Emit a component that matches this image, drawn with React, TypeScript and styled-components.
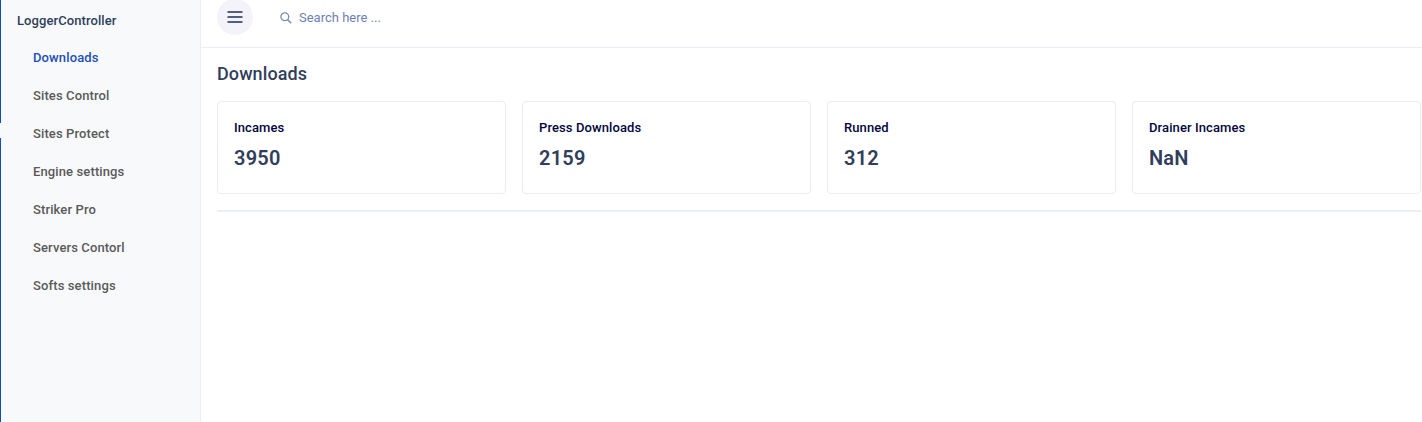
import React from 'react';
import styled, { createGlobalStyle } from 'styled-components';

const GlobalStyle = createGlobalStyle`
  * { box-sizing: border-box; }
  body {
    margin: 0;
    background: #fff;
    font-family: Roboto, "Liberation Sans", sans-serif;
    font-size: 13px;
    color: #313e5b;
    overflow: hidden;
  }
`;

const Page = styled.div`
  display: flex;
  height: 100vh;
`;

const Rail = styled.div`
  flex: 0 0 1px;
  display: flex;
  flex-direction: column;
  background: #f8f9fb;
`;

const RailSegment = styled.span<{ $height?: number }>`
  background: #0f4fc4;
  ${({ $height }) => ($height ? `height: ${$height}px; margin-bottom: 15px;` : 'flex: 1;')}
`;

const Sidebar = styled.aside`
  flex: 0 0 200px;
  background: #f8f9fb;
  border-right: 1px solid #ebecf4;
`;

const Brand = styled.div`
  padding: 11px 16px 8px;
  line-height: 20px;
  font-weight: 500;
  letter-spacing: 0.08px;
`;

const Nav = styled.nav`
  display: flex;
  flex-direction: column;
`;

const NavItem = styled.a<{ $active?: boolean }>`
  padding: 0 32px;
  line-height: 38px;
  font-weight: 500;
  letter-spacing: 0.12px;
  color: ${({ $active }) => ($active ? '#1d4fb8' : '#5a5a5a')};
`;

const Main = styled.main`
  flex: 1;
  min-width: 0;
`;

const Header = styled.header`
  display: flex;
  align-items: flex-start;
  height: 48px;
  padding-left: 16px;
  border-bottom: 1px solid #ebecf4;
`;

const MenuButton = styled.button`
  display: flex;
  align-items: center;
  justify-content: center;
  width: 36px;
  height: 36px;
  margin: -1px 27px 0 0;
  padding: 0;
  border: 0;
  border-radius: 50%;
  background: #f3f3f9;
  color: #525f80;
`;

const Search = styled.label`
  display: flex;
  align-items: center;
  height: 35px;
  gap: 7px;
  color: #7081b0;
`;

const SearchText = styled.span`
  font-size: 13px;
  line-height: 35px;
`;

const Content = styled.section`
  padding: 15px 1px 0 16px;
`;

const Title = styled.h1`
  margin: 0 0 16px;
  font-size: 18px;
  line-height: 22px;
  font-weight: 500;
  letter-spacing: 0.1px;
`;

const Cards = styled.div`
  display: grid;
  grid-template-columns: repeat(4, 1fr);
  gap: 16px;
`;

const Card = styled.article`
  height: 93px;
  padding: 16px;
  border: 1px solid #ebecf4;
  border-radius: 4px;
`;

const CardLabel = styled.div`
  font-weight: 500;
  line-height: 20px;
  letter-spacing: 0.1px;
  color: #03053d;
`;

const CardValue = styled.div`
  margin-top: 8px;
  font-size: 20px;
  line-height: 24px;
  font-weight: 650;
  letter-spacing: 0.2px;
`;

const Divider = styled.hr`
  height: 2px;
  margin: 16px 0 0;
  border: 0;
  background: #ebeef4;
`;

const links = [
  'Downloads',
  'Sites Control',
  'Sites Protect',
  'Engine settings',
  'Striker Pro',
  'Servers Contorl',
  'Softs settings',
];

const stats = [
  { label: 'Incames', value: '3950' },
  { label: 'Press Downloads', value: '2159' },
  { label: 'Runned', value: '312' },
  { label: 'Drainer Incames', value: 'NaN' },
];

export default function App() {
  return (
    <Page>
      <GlobalStyle />
      <Rail>
        <RailSegment $height={123} />
        <RailSegment />
      </Rail>
      <Sidebar>
        <Brand>LoggerController</Brand>
        <Nav>
          {links.map((link, i) => (
            <NavItem key={link} $active={i === 0}>{link}</NavItem>
          ))}
        </Nav>
      </Sidebar>
      <Main>
        <Header>
          <MenuButton aria-label="Menu">
            <svg width="16" height="12" viewBox="0 0 16 12" fill="currentColor">
              <rect x="0.5" y="0" width="15" height="2" />
              <rect x="0.5" y="5" width="15" height="2" />
              <rect x="0.5" y="10" width="15" height="2" />
            </svg>
          </MenuButton>
          <Search>
            <svg width="12" height="12" viewBox="0 0 12 12" fill="none" stroke="#7c8db0" strokeWidth="1.3">
              <circle cx="4.8" cy="4.8" r="3.9" />
              <path d="M7.6 7.6 L11.2 11.2" strokeWidth="1.5" />
            </svg>
            <SearchText>Search here ...</SearchText>
          </Search>
        </Header>
        <Content>
          <Title>Downloads</Title>
          <Cards>
            {stats.map(({ label, value }) => (
              <Card key={label}>
                <CardLabel>{label}</CardLabel>
                <CardValue>{value}</CardValue>
              </Card>
            ))}
          </Cards>
          <Divider />
        </Content>
      </Main>
    </Page>
  );
}
